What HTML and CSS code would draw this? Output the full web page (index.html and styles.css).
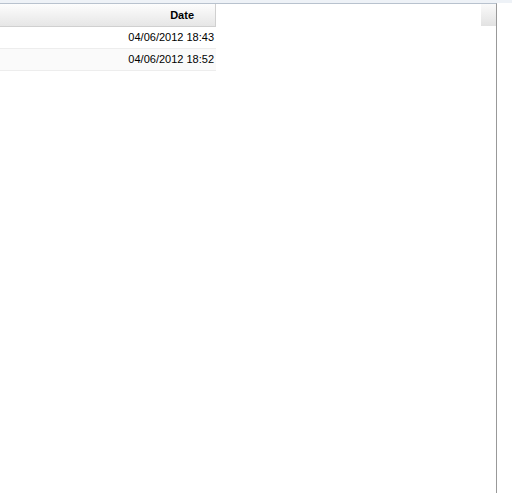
FILE: index.html
```html
<!DOCTYPE html>
<html>
<head>
<meta charset="utf-8">
<link rel="stylesheet" href="styles.css">
</head>
<body>
<div class="topstrip"></div>
<div class="grid">
  <div class="body">
    <div class="header">
      <div class="hcell">Date</div>
      <div class="hfill"></div>
      <div class="hscroll"></div>
    </div>
    <div class="rows">
      <div class="row"><div class="cell">04/06/2012 18:43</div></div>
      <div class="row alt"><div class="cell">04/06/2012 18:52</div></div>
    </div>
  </div>
</div>
</body>
</html>
```
FILE: styles.css
```css
html, body {
  margin: 0;
  padding: 0;
  background: #fff;
  font-family: "Liberation Sans", Arial, sans-serif;
  font-size: 11px;
  color: #000;
}
.topstrip {
  height: 3px;
  background: #eef2f7;
}
.grid {
  width: 497px;
  height: 490px;
  box-sizing: border-box;
  border-top: 1px solid #b8c2ce;
  border-right: 1px solid #999;
}
.header {
  display: flex;
  height: 23px;
}
.hcell {
  width: 216px;
  box-sizing: border-box;
  border-right: 1px solid #d0d0d0;
  border-bottom: 1px solid #d0d0d0;
  background: linear-gradient(#fdfdfd, #e6e6e6);
  text-align: right;
  padding-right: 21px;
  font-weight: bold;
  line-height: 22px;
}
.hfill {
  flex: 1;
}
.hscroll {
  width: 15px;
  height: 22px;
  background: linear-gradient(#fafafa, #e2e2e2);
}
.row {
  width: 216px;
  height: 21px;
  border-bottom: 1px solid #ededed;
}
.row.alt {
  background: #fafafa;
}
.cell {
  text-align: right;
  padding-right: 2px;
  line-height: 21px;
}
```
